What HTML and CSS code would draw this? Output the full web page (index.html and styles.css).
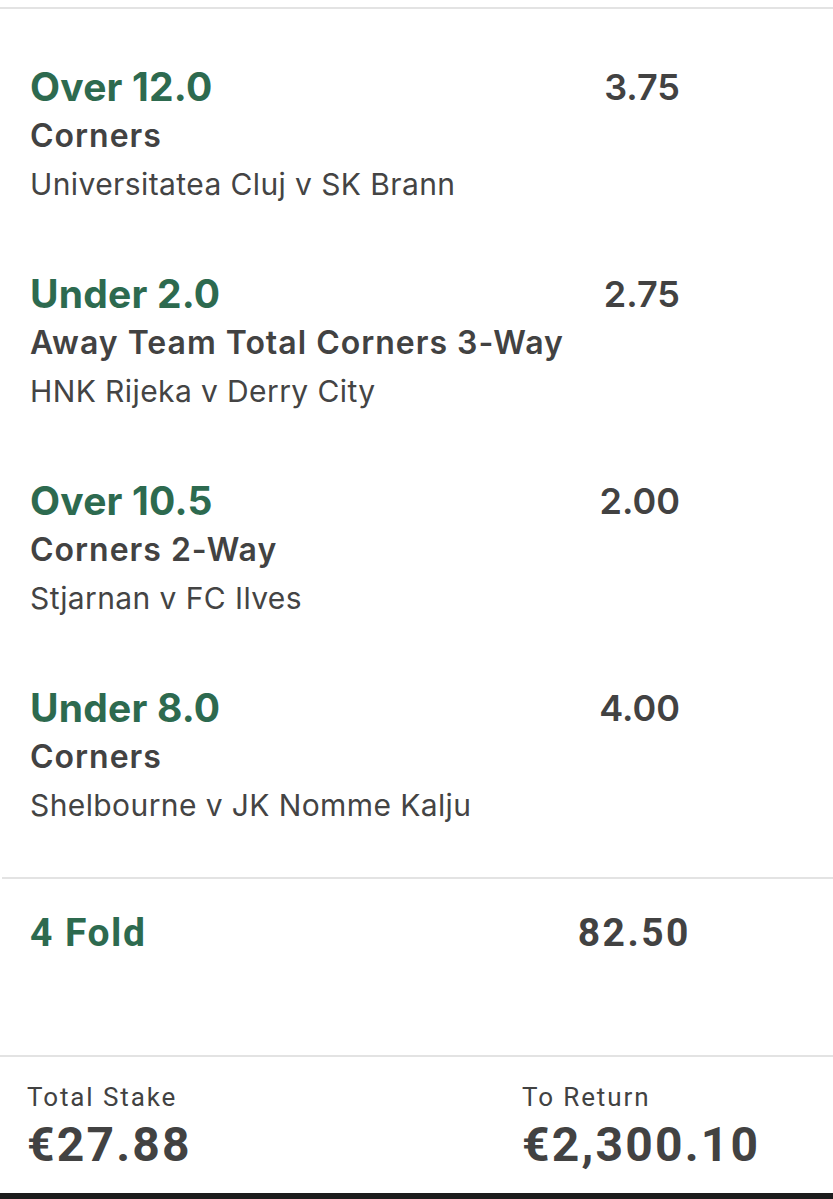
FILE: index.html
```html
<!DOCTYPE html>
<html lang="en">
<head>
<meta charset="utf-8">
<title>Bet Slip</title>
<link rel="stylesheet" href="styles.css">
</head>
<body>
<div class="slip">
  <div class="legs">
    <div class="leg">
      <div class="leg-info">
        <div class="selection">Over 12.0</div>
        <div class="market">Corners</div>
        <div class="event">Universitatea Cluj v SK Brann</div>
      </div>
      <div class="odds">3.75</div>
    </div>
    <div class="leg">
      <div class="leg-info">
        <div class="selection">Under 2.0</div>
        <div class="market">Away Team Total Corners 3-Way</div>
        <div class="event">HNK Rijeka v Derry City</div>
      </div>
      <div class="odds">2.75</div>
    </div>
    <div class="leg">
      <div class="leg-info">
        <div class="selection">Over 10.5</div>
        <div class="market">Corners 2-Way</div>
        <div class="event">Stjarnan v FC Ilves</div>
      </div>
      <div class="odds">2.00</div>
    </div>
    <div class="leg">
      <div class="leg-info">
        <div class="selection">Under 8.0</div>
        <div class="market">Corners</div>
        <div class="event">Shelbourne v JK Nomme Kalju</div>
      </div>
      <div class="odds">4.00</div>
    </div>
  </div>

  <div class="fold">
    <div class="fold-name">4 Fold</div>
    <div class="fold-odds">82.50</div>
  </div>

  <div class="totals">
    <div class="total">
      <div class="total-label">Total Stake</div>
      <div class="total-value">€27.88</div>
    </div>
    <div class="total total-return">
      <div class="total-label">To Return</div>
      <div class="total-value">€2,300.10</div>
    </div>
  </div>
  <div class="home-bar"></div>
</div>
</body>
</html>
```

FILE: styles.css
```css
html, body {
  margin: 0;
  padding: 0;
  background: #ffffff;
}

.slip {
  width: 833px;
  height: 1199px;
  display: flex;
  flex-direction: column;
  font-family: Inter, "Noto Sans", sans-serif;
  color: #424242;
  padding-top: 7px;
  box-sizing: border-box;
}

/* list of selections */
.legs {
  border-top: 2px solid #e3e3e3;
  padding: 53px 153px 0 30px;
  display: flex;
  flex-direction: column;
  gap: 61px;
  height: 870px;
  box-sizing: border-box;
}

.leg {
  display: flex;
  justify-content: space-between;
  align-items: flex-start;
}

.leg-info {
  display: flex;
  flex-direction: column;
}

.selection {
  color: #2d6a4f;
  font-size: 39px;
  font-weight: 700;
  line-height: 50px;
  letter-spacing: 0.2px;
}

.market {
  font-size: 32px;
  font-weight: 600;
  line-height: 48px;
  letter-spacing: 1px;
  color: #424242;
}

.event {
  font-size: 30px;
  font-weight: 400;
  line-height: 48px;
  letter-spacing: 0.4px;
  color: #444444;
}

.odds {
  font-size: 36px;
  font-weight: 600;
  line-height: 50px;
  color: #424242;
}

/* accumulator row */
.fold {
  margin-left: 2px;
  border-top: 2px solid #e3e3e3;
  height: 178px;
  box-sizing: border-box;
  display: flex;
  justify-content: space-between;
  align-items: flex-start;
  padding: 30px 142px 0 28px;
  font-family: Roboto, "Noto Sans", sans-serif;
  font-weight: 700;
  font-size: 39px;
  line-height: 48px;
}

.fold-name {
  color: #2d6a4f;
  letter-spacing: 1.5px;
}

.fold-odds {
  color: #424242;
  letter-spacing: 2.5px;
}

/* stake and return */
.totals {
  border-top: 2px solid #e3e3e3;
  flex: 1;
  display: flex;
  padding: 24px 0 0 27px;
  font-family: Roboto, "Noto Sans", sans-serif;
  color: #424242;
}

.total {
  width: 495px;
  display: flex;
  flex-direction: column;
}

.total-return {
  width: auto;
}

.total-label {
  font-size: 26px;
  line-height: 32px;
  font-weight: 400;
  letter-spacing: 1.9px;
}

.total-value {
  font-size: 48px;
  line-height: 60px;
  margin-top: 2px;
  font-weight: 700;
  letter-spacing: 2.2px;
}

.home-bar {
  height: 6px;
  background: #1c1c1c;
}
```
